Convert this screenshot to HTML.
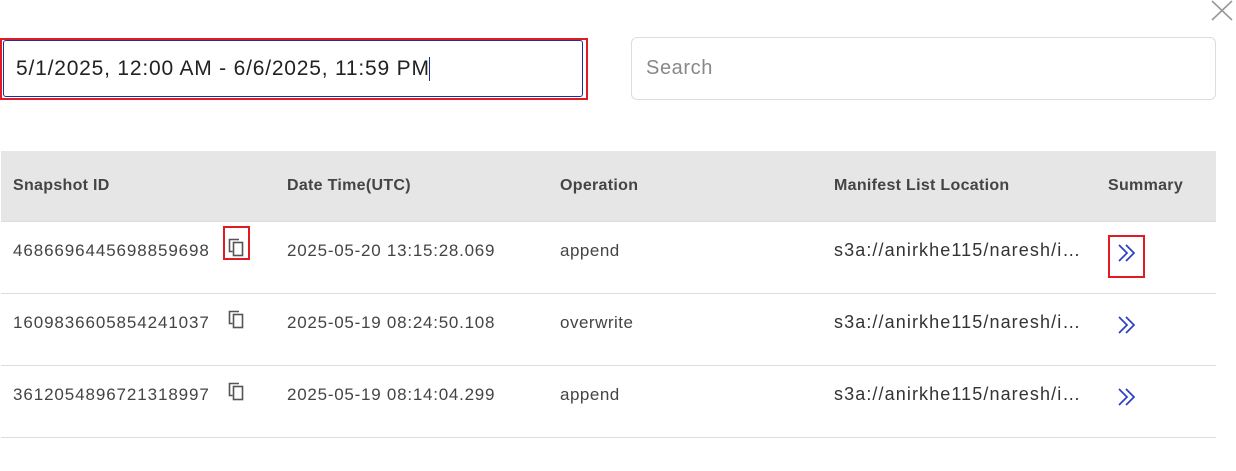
<!DOCTYPE html>
<html><head><style>
body{margin:0;width:1236px;height:471px;background:#fff;font-family:"Liberation Sans",Arial,sans-serif;position:relative;overflow:hidden;color:#333}
.a{position:absolute}
.h{font-weight:bold;font-size:16px;color:#444;top:177px;letter-spacing:0.3px}
.c{font-size:17px;color:#444}
.id{letter-spacing:0.9px}
.dt{letter-spacing:0.75px}
.op{letter-spacing:0.5px}
.m{font-size:18px;color:#333;letter-spacing:1.1px}
</style></head><body>
<svg class="a" style="left:1210px;top:0" width="24" height="21"><path d="M2 1L22 20M22 1L2 20" stroke="#999" stroke-width="1.6"/></svg>
<div class="a" style="left:0;top:38px;width:584px;height:58px;border:2px solid #e01b24"></div>
<div class="a" style="left:3px;top:40px;width:578px;height:55px;border:1.5px solid #1a2fa0;border-radius:3px"></div>
<div class="a" style="left:16px;top:57px;font-size:21px;color:#222;letter-spacing:0.8px">5/1/2025, 12:00 AM - 6/6/2025, 11:59 PM</div>
<div class="a" style="left:429px;top:57px;width:1px;height:24px;background:#1a2fa0"></div>
<div class="a" style="left:631px;top:37px;width:583px;height:61px;border:1px solid #ddd;border-radius:6px"></div>
<div class="a" style="left:646px;top:57px;font-size:20px;color:#888;letter-spacing:0.6px">Search</div>
<div class="a" style="left:1px;top:151px;width:1215px;height:70px;background:#e6e6e6;border-bottom:1px solid #ddd"></div>
<div class="a h" style="left:13px">Snapshot ID</div>
<div class="a h" style="left:287px">Date Time(UTC)</div>
<div class="a h" style="left:560px">Operation</div>
<div class="a h" style="left:834px">Manifest List Location</div>
<div class="a h" style="left:1108px">Summary</div>

<div class="a" style="left:1px;top:293px;width:1215px;height:1px;background:#ddd"></div>
<div class="a" style="left:1px;top:365px;width:1215px;height:1px;background:#ddd"></div>
<div class="a" style="left:1px;top:437px;width:1215px;height:1px;background:#ddd"></div>

<div class="a c id" style="left:13px;top:241px">4686696445698859698</div>
<div class="a c dt" style="left:287px;top:241px">2025-05-20 13:15:28.069</div>
<div class="a c op" style="left:560px;top:241px">append</div>
<div class="a m" style="left:834px;top:240px">s3a://anirkhe115/naresh/i…</div>
<div class="a c id" style="left:13px;top:313px">1609836605854241037</div>
<div class="a c dt" style="left:287px;top:313px">2025-05-19 08:24:50.108</div>
<div class="a c op" style="left:560px;top:313px">overwrite</div>
<div class="a m" style="left:834px;top:312px">s3a://anirkhe115/naresh/i…</div>
<div class="a c id" style="left:13px;top:385px">3612054896721318997</div>
<div class="a c dt" style="left:287px;top:385px">2025-05-19 08:14:04.299</div>
<div class="a c op" style="left:560px;top:385px">append</div>
<div class="a m" style="left:834px;top:384px">s3a://anirkhe115/naresh/i…</div>

<svg class="a" style="left:0;top:0" width="1236" height="471">
<defs>
<g id="cp"><path d="M6.5 13.5H3.5V1.5H13" fill="none" stroke="#555" stroke-width="1.6"/><rect x="7.5" y="4.5" width="9" height="13" fill="none" stroke="#555" stroke-width="1.6"/></g>
<g id="ch"><path d="M1 1L9 9L1 17M8 1L16 9L8 17" fill="none" stroke="#2a3fc0" stroke-width="1.7"/></g>
</defs>
<use href="#cp" x="226" y="238"/>
<use href="#cp" x="226" y="310"/>
<use href="#cp" x="226" y="382"/>
<rect x="224" y="227" width="25" height="32" fill="none" stroke="#e01b24" stroke-width="2"/>
<use href="#ch" x="1118" y="244"/>
<use href="#ch" x="1118" y="316"/>
<use href="#ch" x="1118" y="388"/>
<rect x="1109" y="236" width="35" height="41" fill="none" stroke="#e01b24" stroke-width="2"/>
</svg>
</body></html>
